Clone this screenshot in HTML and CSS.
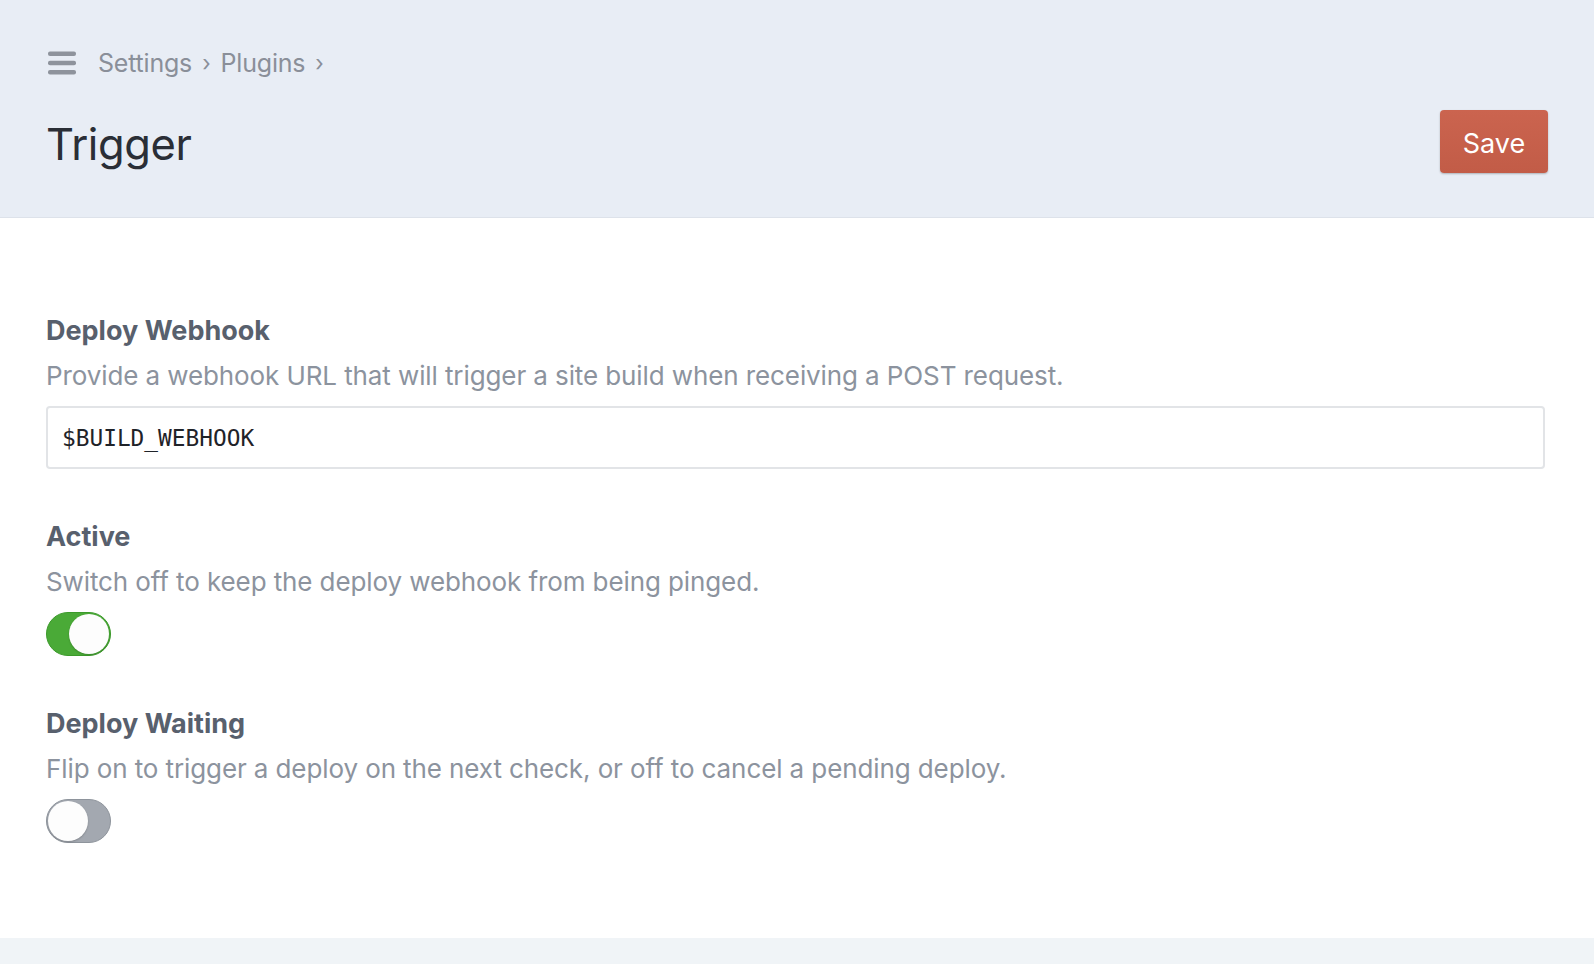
FILE: index.html
```html
<!DOCTYPE html>
<html lang="en">
<head>
<meta charset="utf-8">
<title>Trigger</title>
<link rel="stylesheet" href="styles.css">
</head>
<body>
<div class="page">
  <header class="header">
    <div class="crumbs">
      <svg class="menu" width="28" height="24" viewBox="0 0 28 24" aria-hidden="true">
        <rect x="0" y="0.5" width="28" height="4.5" rx="2" fill="#8e939c"/>
        <rect x="0" y="9.8" width="28" height="4.5" rx="2" fill="#8e939c"/>
        <rect x="0" y="19" width="28" height="4.5" rx="2" fill="#8e939c"/>
      </svg>
      <span class="crumb">Settings</span><span class="sep">›</span><span class="crumb">Plugins</span><span class="sep">›</span>
    </div>
    <div class="titlebar">
      <h1 class="title">Trigger</h1>
      <button class="save">Save</button>
    </div>
  </header>
  <main class="content">
    <div class="field">
      <div class="label">Deploy Webhook</div>
      <div class="desc">Provide a webhook URL that will trigger a site build when receiving a POST request.</div>
      <div class="input">$BUILD_WEBHOOK</div>
    </div>
    <div class="field">
      <div class="label">Active</div>
      <div class="desc">Switch off to keep the deploy webhook from being pinged.</div>
      <div class="toggle on"><span class="knob"></span></div>
    </div>
    <div class="field">
      <div class="label">Deploy Waiting</div>
      <div class="desc">Flip on to trigger a deploy on the next check, or off to cancel a pending deploy.</div>
      <div class="toggle off"><span class="knob"></span></div>
    </div>
  </main>
  <footer class="footer"></footer>
</div>
</body>
</html>
```
FILE: styles.css
```css
* { box-sizing: border-box; }
html, body { margin: 0; padding: 0; }
body {
  font-family: Inter, "Noto Sans", "Liberation Sans", sans-serif;
  background: #ffffff;
  color: #2a2e36;
}
.page {
  display: flex;
  flex-direction: column;
  min-height: 100vh;
}
.header {
  background: #e8edf5;
  border-bottom: 1px solid #dde2ea;
  padding: 45px 46px 44px 48px;
}
.crumbs {
  display: flex;
  align-items: center;
  height: 36px;
  font-size: 25px;
  color: #8a8f99;
}
.menu { display: block; margin-right: 22px; }
.crumb { letter-spacing: -0.2px; }
.sep { margin: 0 10px; font-size: 22px; }
.titlebar {
  display: flex;
  align-items: center;
  justify-content: space-between;
  margin-top: 29px;
  height: 63px;
}
.title {
  margin: 0 0 0 -2px;
  font-size: 43.5px;
  font-weight: 400;
  color: #2a2e36;
  letter-spacing: -0.4px;
  position: relative;
  top: 2px;
}
.save {
  width: 108px;
  height: 63px;
  border: none;
  border-radius: 4px;
  background: linear-gradient(#cb644f, #c25c47);
  color: #fff;
  font-family: inherit;
  font-size: 27px;
  box-shadow: 0 1px 2px rgba(0,0,0,0.25);
  padding: 4px 0 0;
}
.content {
  flex: 1;
  padding: 95px 49px 0 46px;
}
.field { margin-bottom: 50px; }
.label {
  font-size: 27px;
  line-height: 36px;
  font-weight: 700;
  color: #58606d;
  letter-spacing: 0;
}
.desc {
  margin-top: 9px;
  font-size: 26px;
  line-height: 36px;
  color: #8c939e;
  letter-spacing: -0.1px;
}
.input {
  margin-top: 12px;
  height: 63px;
  border: 2px solid #e2e4e7;
  border-radius: 4px;
  display: flex;
  align-items: center;
  padding: 0 14px;
  font-family: "DejaVu Sans Mono", "Liberation Mono", monospace;
  font-size: 22.8px;
  color: #1f2329;
}
.toggle {
  margin-top: 12px;
  width: 65px;
  height: 44px;
  border-radius: 22px;
  display: flex;
  align-items: center;
  padding: 0 1px;
}
.toggle.on {
  background: #4aaa37;
  border: 1.5px solid #3c9a2b;
  justify-content: flex-end;
}
.toggle.off {
  background: #a3a8b0;
  border: 1.5px solid #8e949c;
  justify-content: flex-start;
}
.knob {
  width: 40px;
  height: 40px;
  border-radius: 50%;
  background: #fdfdfd;
  box-shadow: 0 1px 2px rgba(0,0,0,0.2);
}
.footer {
  height: 26px;
  background: #f0f4f7;
}
```
